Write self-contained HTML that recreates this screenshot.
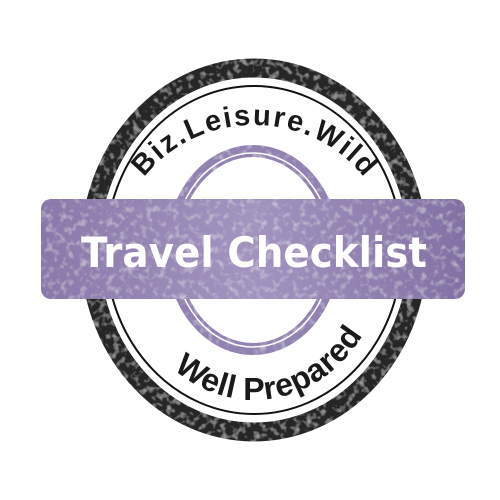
<!DOCTYPE html>
<html><head><meta charset="utf-8"><style>
html,body{margin:0;padding:0;background:#fff;width:500px;height:500px;overflow:hidden}
.c{font-family:"Liberation Sans",Arial,sans-serif;font-weight:bold;fill:#1a1a1a}
.t{font-family:"DejaVu Sans","Liberation Sans",sans-serif;font-weight:bold;fill:#fff}
</style></head><body>
<svg width="500" height="500" viewBox="0 0 500 500" xmlns="http://www.w3.org/2000/svg">
<defs>
<filter id="tex" filterUnits="userSpaceOnUse" x="0" y="0" width="500" height="500">
<feTurbulence type="fractalNoise" baseFrequency="0.15" numOctaves="2" seed="3" result="n"/>
<feColorMatrix in="n" type="matrix" values="0 0 0 0 1  0 0 0 0 1  0 0 0 0 1  0 0 0 0.9 -0.45" result="w"/>
<feComposite in="w" in2="SourceGraphic" operator="in" result="wm"/>
<feMerge><feMergeNode in="SourceGraphic"/><feMergeNode in="wm"/></feMerge>
</filter>
<linearGradient id="bg" x1="0" x2="1" y1="0" y2="0">
<stop offset="0" stop-color="#8a78aa"/><stop offset="0.5" stop-color="#a294bf"/><stop offset="1" stop-color="#8270a4"/>
</linearGradient>
<path id="top" d="M 119,250 A 135 125 0 0 1 389,250"/>
<path id="bot" d="M 122,250 A 132 150 0 0 0 386,250"/>
</defs>
<ellipse cx="254" cy="250" rx="164" ry="182" fill="none" stroke="#262626" stroke-width="19" filter="url(#tex)"/>
<ellipse cx="254" cy="250" rx="148" ry="164" fill="none" stroke="#111" stroke-width="2"/>
<ellipse cx="253" cy="250" rx="81" ry="99" fill="none" stroke="#9182b2" stroke-width="12" filter="url(#tex)"/>
<ellipse cx="253" cy="250" rx="79" ry="97" fill="none" stroke="#fff" stroke-width="1.5"/>
<text class="c" font-size="29"><textPath href="#top" startOffset="50%" text-anchor="middle" textLength="252" lengthAdjust="spacing">Biz.Leisure.Wild</textPath></text>
<text class="c" font-size="32"><textPath href="#bot" startOffset="55%" text-anchor="middle" textLength="220" lengthAdjust="spacing">Well Prepared</textPath></text>
<rect x="41" y="199" width="424" height="100" rx="10" fill="url(#bg)" filter="url(#tex)"/>
<text class="t" x="254" y="267" text-anchor="middle" font-size="42" textLength="346" lengthAdjust="spacingAndGlyphs">Travel Checklist</text>
</svg>
</body></html>
